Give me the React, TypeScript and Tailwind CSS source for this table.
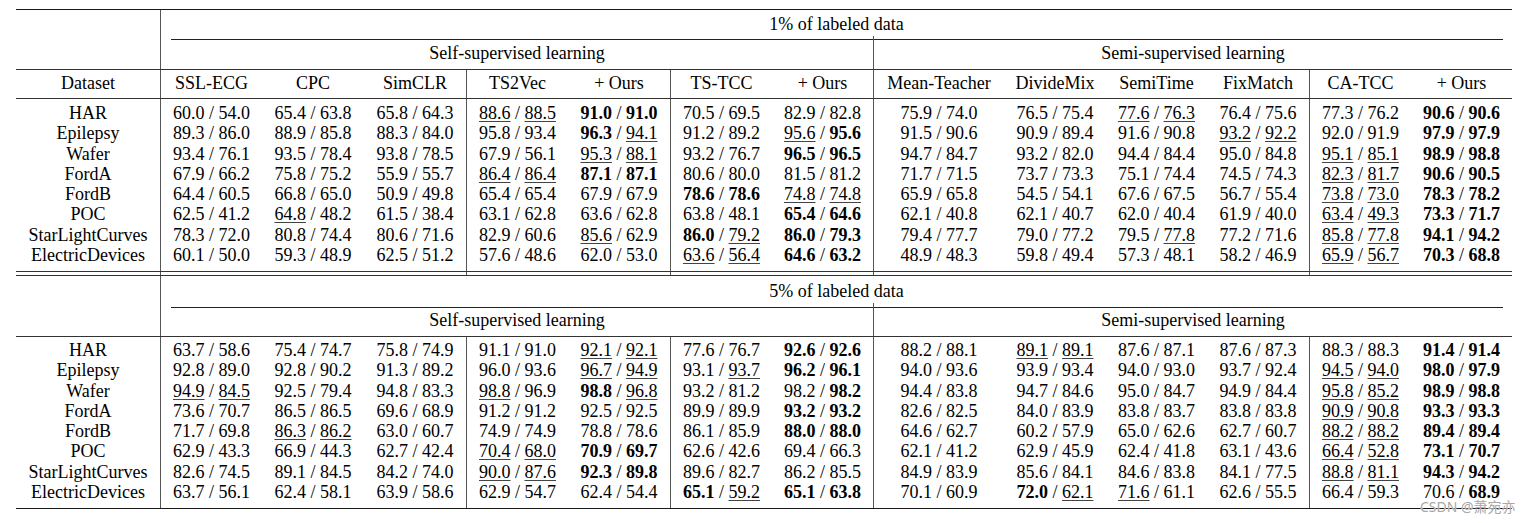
import React from "react";

const GRID =
  "grid grid-cols-[144px_102px_102px_102px_102px_102px_102px_101px_131px_102px_101px_102px_102px_101px]";
const ALL = [1, 4, 6, 8, 12];
const VC = "border-l border-[#555]";

type Row = [string, string[]];

const topRows: Row[] = [
  ["HAR", ["60.0 / 54.0", "65.4 / 63.8", "65.8 / 64.3", "_88.6_ / _88.5_", "**91.0** / **91.0**", "70.5 / 69.5", "82.9 / 82.8", "75.9 / 74.0", "76.5 / 75.4", "_77.6_ / _76.3_", "76.4 / 75.6", "77.3 / 76.2", "**90.6** / **90.6**"]],
  ["Epilepsy", ["89.3 / 86.0", "88.9 / 85.8", "88.3 / 84.0", "95.8 / 93.4", "**96.3** / _94.1_", "91.2 / 89.2", "_95.6_ / **95.6**", "91.5 / 90.6", "90.9 / 89.4", "91.6 / 90.8", "_93.2_ / _92.2_", "92.0 / 91.9", "**97.9** / **97.9**"]],
  ["Wafer", ["93.4 / 76.1", "93.5 / 78.4", "93.8 / 78.5", "67.9 / 56.1", "_95.3_ / _88.1_", "93.2 / 76.7", "**96.5** / **96.5**", "94.7 / 84.7", "93.2 / 82.0", "94.4 / 84.4", "95.0 / 84.8", "_95.1_ / _85.1_", "**98.9** / **98.8**"]],
  ["FordA", ["67.9 / 66.2", "75.8 / 75.2", "55.9 / 55.7", "_86.4_ / _86.4_", "**87.1** / **87.1**", "80.6 / 80.0", "81.5 / 81.2", "71.7 / 71.5", "73.7 / 73.3", "75.1 / 74.4", "74.5 / 74.3", "_82.3_ / _81.7_", "**90.6** / **90.5**"]],
  ["FordB", ["64.4 / 60.5", "66.8 / 65.0", "50.9 / 49.8", "65.4 / 65.4", "67.9 / 67.9", "**78.6** / **78.6**", "_74.8_ / _74.8_", "65.9 / 65.8", "54.5 / 54.1", "67.6 / 67.5", "56.7 / 55.4", "_73.8_ / _73.0_", "**78.3** / **78.2**"]],
  ["POC", ["62.5 / 41.2", "_64.8_ / 48.2", "61.5 / 38.4", "63.1 / 62.8", "63.6 / 62.8", "63.8 / 48.1", "**65.4** / **64.6**", "62.1 / 40.8", "62.1 / 40.7", "62.0 / 40.4", "61.9 / 40.0", "_63.4_ / _49.3_", "**73.3** / **71.7**"]],
  ["StarLightCurves", ["78.3 / 72.0", "80.8 / 74.4", "80.6 / 71.6", "82.9 / 60.6", "_85.6_ / 62.9", "**86.0** / _79.2_", "**86.0** / **79.3**", "79.4 / 77.7", "79.0 / 77.2", "79.5 / _77.8_", "77.2 / 71.6", "_85.8_ / _77.8_", "**94.1** / **94.2**"]],
  ["ElectricDevices", ["60.1 / 50.0", "59.3 / 48.9", "62.5 / 51.2", "57.6 / 48.6", "62.0 / 53.0", "_63.6_ / _56.4_", "**64.6** / **63.2**", "48.9 / 48.3", "59.8 / 49.4", "57.3 / 48.1", "58.2 / 46.9", "_65.9_ / _56.7_", "**70.3** / **68.8**"]],
];

const bottomRows: Row[] = [
  ["HAR", ["63.7 / 58.6", "75.4 / 74.7", "75.8 / 74.9", "91.1 / 91.0", "_92.1_ / _92.1_", "77.6 / 76.7", "**92.6** / **92.6**", "88.2 / 88.1", "_89.1_ / _89.1_", "87.6 / 87.1", "87.6 / 87.3", "88.3 / 88.3", "**91.4** / **91.4**"]],
  ["Epilepsy", ["92.8 / 89.0", "92.8 / 90.2", "91.3 / 89.2", "96.0 / 93.6", "_96.7_ / _94.9_", "93.1 / _93.7_", "**96.2** / **96.1**", "94.0 / 93.6", "93.9 / 93.4", "94.0 / 93.0", "93.7 / 92.4", "_94.5_ / _94.0_", "**98.0** / **97.9**"]],
  ["Wafer", ["_94.9_ / _84.5_", "92.5 / 79.4", "94.8 / 83.3", "_98.8_ / 96.9", "**98.8** / _96.8_", "93.2 / 81.2", "98.2 / **98.2**", "94.4 / 83.8", "94.7 / 84.6", "95.0 / 84.7", "94.9 / 84.4", "_95.8_ / _85.2_", "**98.9** / **98.8**"]],
  ["FordA", ["73.6 / 70.7", "86.5 / 86.5", "69.6 / 68.9", "91.2 / 91.2", "92.5 / 92.5", "89.9 / 89.9", "**93.2** / **93.2**", "82.6 / 82.5", "84.0 / 83.9", "83.8 / 83.7", "83.8 / 83.8", "_90.9_ / _90.8_", "**93.3** / **93.3**"]],
  ["FordB", ["71.7 / 69.8", "_86.3_ / _86.2_", "63.0 / 60.7", "74.9 / 74.9", "78.8 / 78.6", "86.1 / 85.9", "**88.0** / **88.0**", "64.6 / 62.7", "60.2 / 57.9", "65.0 / 62.6", "62.7 / 60.7", "_88.2_ / _88.2_", "**89.4** / **89.4**"]],
  ["POC", ["62.9 / 43.3", "66.9 / 44.3", "62.7 / 42.4", "_70.4_ / _68.0_", "**70.9** / **69.7**", "62.6 / 42.6", "69.4 / 66.3", "62.1 / 41.2", "62.9 / 45.9", "62.4 / 41.8", "63.1 / 43.6", "_66.4_ / _52.8_", "**73.1** / **70.7**"]],
  ["StarLightCurves", ["82.6 / 74.5", "89.1 / 84.5", "84.2 / 74.0", "_90.0_ / _87.6_", "**92.3** / **89.8**", "89.6 / 82.7", "86.2 / 85.5", "84.9 / 83.9", "85.6 / 84.1", "84.6 / 83.8", "84.1 / 77.5", "_88.8_ / _81.1_", "**94.3** / **94.2**"]],
  ["ElectricDevices", ["63.7 / 56.1", "62.4 / 58.1", "63.9 / 58.6", "62.9 / 54.7", "62.4 / 54.4", "**65.1** / _59.2_", "**65.1** / **63.8**", "70.1 / 60.9", "**72.0** / _62.1_", "_71.6_ / 61.1", "62.6 / 55.5", "66.4 / 59.3", "70.6 / **68.9**"]],
];

const headers = ["Dataset", "SSL-ECG", "CPC", "SimCLR", "TS2Vec", "+ Ours", "TS-TCC", "+ Ours", "Mean-Teacher", "DivideMix", "SemiTime", "FixMatch", "CA-TCC", "+ Ours"];

function Num({ s }: { s: string }) {
  const parts = s.split(" / ");
  return (
    <>
      {parts.map((p, i) => {
        let cls = "";
        let t = p;
        if (p.startsWith("**")) {
          t = p.slice(2, -2);
          cls = "font-bold";
        } else if (p.startsWith("_")) {
          t = p.slice(1, -1);
          cls = "underline decoration-[#444] decoration-1 underline-offset-[2px]";
        }
        return (
          <React.Fragment key={i}>
            {i > 0 && " / "}
            <span className={cls}>{t}</span>
          </React.Fragment>
        );
      })}
    </>
  );
}

function Spacer({ h, b }: { h: string; b: number[] }) {
  return (
    <div className={`${GRID} ${h}`}>
      {Array.from({ length: 14 }, (_, i) => (
        <div key={i} className={b.includes(i) ? VC : ""} />
      ))}
    </div>
  );
}

function DataRow({ r }: { r: Row }) {
  return (
    <div className={`${GRID} h-[20.3px] leading-[20.3px]`}>
      <div className="text-center whitespace-nowrap">{r[0]}</div>
      {r[1].map((c, i) => (
        <div key={i} className={`text-center whitespace-nowrap ${ALL.includes(i + 1) ? VC : ""}`}>
          <Num s={c} />
        </div>
      ))}
    </div>
  );
}

function Rule({ dark }: { dark?: boolean }) {
  return <div className={dark ? "h-px bg-[#1a1a1a]" : "h-px bg-[#333]"} />;
}

export default function App() {
  return (
    <div className="relative w-[1534px] h-[523px] bg-white text-[#000] font-[family-name:'Liberation_Serif','Times_New_Roman',serif] text-[18px] overflow-hidden">
      <div className="pt-[9px] pl-[16px]">
        <div className="w-[1496px]">
          {/* ---------- 1% table ---------- */}
          <Rule dark />
          <div className={`${GRID} h-[26px]`}>
            <div />
            <div className={`col-span-13 ${VC} text-center pt-[4px] leading-[20px]`}>1% of labeled data</div>
          </div>
          <div className={`${GRID} h-[6px]`}>
            <div />
            <div className={`col-span-7 ${VC} pt-[3px] pl-[10px]`}>
              <div className="h-px bg-[#222]" />
            </div>
            <div className={`col-span-6 ${VC} pt-[3px] pr-[9px]`}>
              <div className="h-px bg-[#222]" />
            </div>
          </div>
          <div className={`${GRID} h-[27px]`}>
            <div />
            <div className={`col-span-7 ${VC} text-center pt-[1px] leading-[20px]`}>Self-supervised learning</div>
            <div className={`col-span-6 ${VC} text-center pt-[1px] leading-[20px]`}>Semi-supervised learning</div>
          </div>
          <Rule />
          <div className={`${GRID} h-[28px]`}>
            {headers.map((h, i) => (
              <div key={i} className={`text-center whitespace-nowrap pt-[3px] leading-[20.3px] ${ALL.includes(i) ? VC : ""}`}>
                {h}
              </div>
            ))}
          </div>
          <Rule />
          <Spacer h="h-[4px]" b={ALL} />
          {topRows.map((r, i) => (
            <DataRow key={i} r={r} />
          ))}
          <Spacer h="h-[5.6px]" b={ALL} />
          <Rule />
          <Spacer h="h-[3px]" b={ALL} />
          <Rule />

          {/* ---------- 5% table ---------- */}
          <div className={`${GRID} h-[27px]`}>
            <div />
            <div className={`col-span-13 ${VC} text-center pt-[5px] leading-[20px]`}>5% of labeled data</div>
          </div>
          <div className={`${GRID} h-[7px]`}>
            <div />
            <div className={`col-span-7 ${VC} pt-[4px] pl-[10px]`}>
              <div className="h-px bg-[#222]" />
            </div>
            <div className={`col-span-6 ${VC} pt-[4px] pr-[9px]`}>
              <div className="h-px bg-[#222]" />
            </div>
          </div>
          <div className={`${GRID} h-[26px]`}>
            <div />
            <div className={`col-span-7 ${VC} text-center leading-[20px]`}>Self-supervised learning</div>
            <div className={`col-span-6 ${VC} text-center leading-[20px]`}>Semi-supervised learning</div>
          </div>
          <Rule />
          <Spacer h="h-[3px]" b={ALL} />
          {bottomRows.map((r, i) => (
            <DataRow key={i} r={r} />
          ))}
          <Spacer h="h-[5.6px]" b={ALL} />
          <Rule dark />
        </div>
      </div>
      <div className="absolute left-[1420px] top-[499px] text-[14px] leading-[16px] text-[#a8a8a8] font-[family-name:'Noto_Sans','Noto_Sans_CJK_SC',sans-serif] [text-shadow:0_0_1px_#fff]">
        CSDN @萧宛亦
      </div>
    </div>
  );
}
